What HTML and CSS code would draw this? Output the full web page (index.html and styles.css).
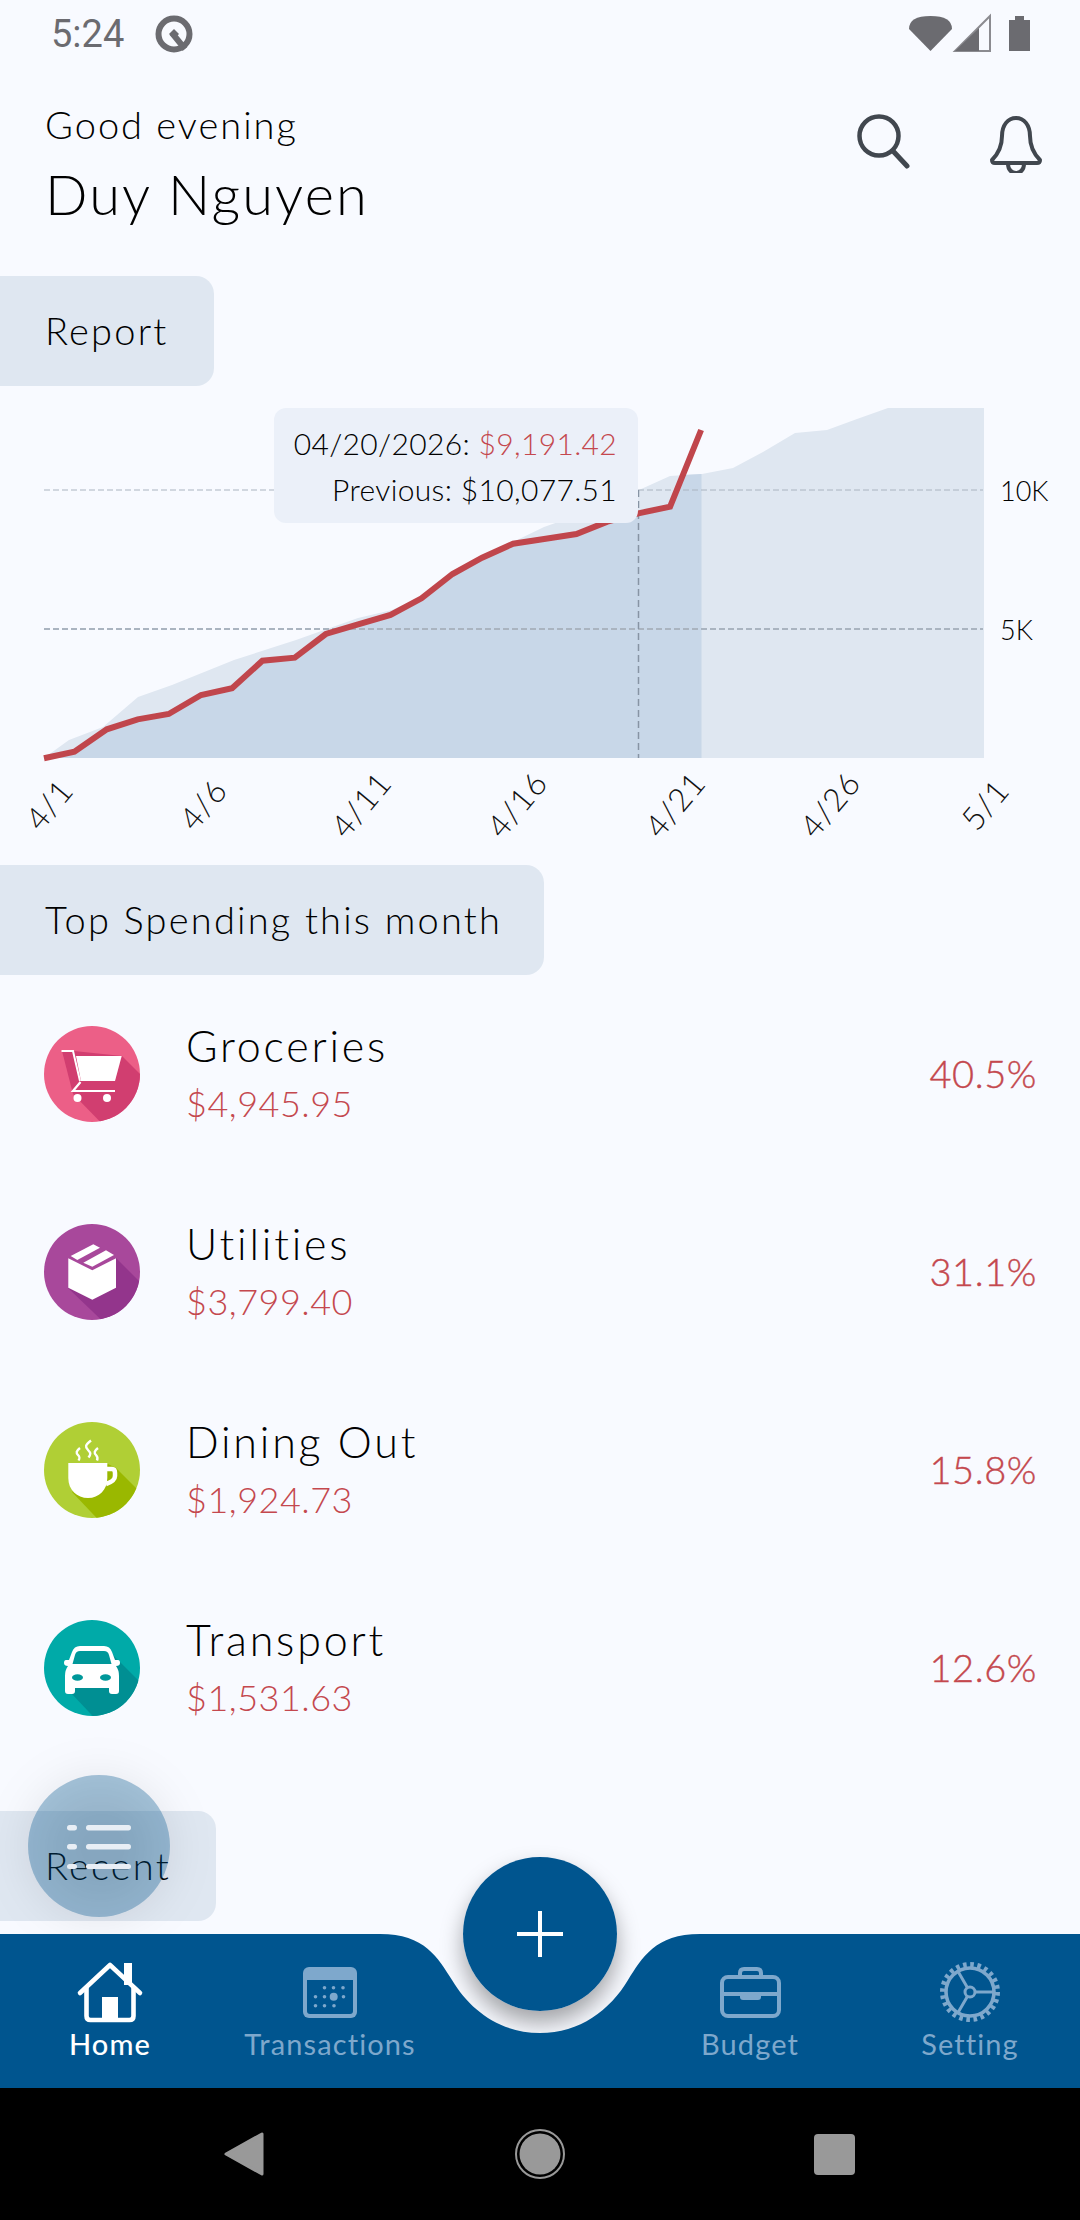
FILE: index.html
```html
<!DOCTYPE html>
<html lang="en">
<head>
<meta charset="utf-8">
<title>Home</title>
<link rel="stylesheet" href="styles.css">
</head>
<body>
<div class="phone">
  <main class="main">
    <div class="status">
      <div class="status-left">
        <span class="clock">5:24</span>
        <svg class="st-q" viewBox="0 0 40 40"><circle cx="20" cy="20" r="15.5" fill="none" stroke="#6b6b70" stroke-width="6"/><path d="M20 15l5 5-5 5-5-5z" fill="#6b6b70"/><path d="M18 19l13 16" stroke="#6b6b70" stroke-width="6"/></svg>
      </div>
      <svg class="st-right" viewBox="905 12 130 42">
        <path d="M909 28Q909 15 930.5 15T952 28L930.5 50Z" fill="#6b6b70"/>
        <path d="M990 15V50H955Z" fill="none" stroke="#8b8b90" stroke-width="2"/>
        <path d="M979 27V50H955Z" fill="#6b6b70"/>
        <path d="M1015 15h9v4h6v31h-21v-31h6z" fill="#6b6b70"/>
      </svg>
    </div>

    <header class="header">
      <div>
        <p class="greet">Good evening</p>
        <h1 class="name">Duy Nguyen</h1>
      </div>
      <div class="header-icons">
        <svg class="ic-search" viewBox="855 115 54 56"><circle cx="878" cy="138" r="19.5" fill="none" stroke="#41474f" stroke-width="4.5"/><path d="M892 153l14 15" stroke="#41474f" stroke-width="5" stroke-linecap="round"/></svg>
        <svg class="ic-bell" viewBox="986 113 56 60"><path d="M990 160Q1000 150 1000 136C1000 125 1006 118 1014 118C1022 118 1028 125 1028 136Q1028 150 1038 160Q1038 163 1035 163H993Q990 163 990 160Z" fill="none" stroke="#41474f" stroke-width="4" stroke-linejoin="round"/><path d="M1006 164C1006 176 1022 176 1022 164" fill="none" stroke="#41474f" stroke-width="4"/></svg>
      </div>
    </header>

    <div class="chip chip-report">Report</div>

    <section class="chart">
      <svg class="chart-svg" viewBox="0 386 1080 479">
        <path class="area-prev" d="M44 758L69 740L103 727L138 697L172 685L234 660L296 640L358 618L392 610L421 597L452 572L482 555L513 542L544 527L578 515L607 503L639 490L670 476L702 474L733 468L763 452L795 433L827 430L857 419L888 408H984V758Z"/>
        <path class="area-cur" d="M44 758L74.4 751.7L106.8 729.3L137.7 719.3L168.7 714L201.1 695L232.1 688.3L262.4 660.7L294.8 657.7L325.8 634L358.1 624.3L390.5 615L421.5 598.3L452.5 574L482.1 557.7L513.1 543.7L544.1 539L576.4 534L607.4 521.7L638.4 513.3L670.1 506.7L683 475L701.5 474V758Z"/>
        <path class="grid" d="M44 490H983"/>
        <path class="grid grid-strong" d="M44 629H983"/>
        <path class="cross" d="M638.5 490V758"/>
        <polyline class="line" points="44,758.3 74.4,751.7 106.8,729.3 137.7,719.3 168.7,714 201.1,695 232.1,688.3 262.4,660.7 294.8,657.7 325.8,634 358.1,624.3 390.5,615 421.5,598.3 452.5,574 482.1,557.7 513.1,543.7 544.1,539 576.4,534 607.4,521.7 638.4,513.3 670.1,506.7 701.1,430"/>
        <text class="ytick" x="1000" y="501">10K</text>
        <text class="ytick" x="1000" y="640">5K</text>
        <text class="xtick" transform="translate(58 812) rotate(-50)">4/1</text>
        <text class="xtick" transform="translate(212 812) rotate(-50)">4/6</text>
        <text class="xtick" transform="translate(370 812) rotate(-50)">4/11</text>
        <text class="xtick" transform="translate(526 812) rotate(-50)">4/16</text>
        <text class="xtick" transform="translate(684 812) rotate(-50)">4/21</text>
        <text class="xtick" transform="translate(839 812) rotate(-50)">4/26</text>
        <text class="xtick" transform="translate(994 812) rotate(-50)">5/1</text>
      </svg>
      <div class="tooltip">
        <div>04/20/2026: <span class="red">$9,191.42</span></div>
        <div>Previous: $10,077.51</div>
      </div>
    </section>

    <div class="chip chip-top">Top Spending this month</div>

    <ul class="rows">
      <li class="row">
        <svg class="cat" viewBox="0 0 96 96">
          <clipPath id="c1"><circle cx="48" cy="48" r="48"/></clipPath>
          <g clip-path="url(#c1)">
            <rect width="96" height="96" fill="#ec5f87"/>
            <path d="M18 25H30L78 30L110 62V110H70L29 68Z" fill="#d13e70"/>
          </g>
          <path d="M17.5 25H29L36 55" fill="none" stroke="#fff" stroke-width="2"/>
          <path d="M32 30H77.7L71 55H37Z" fill="#fff"/>
          <path d="M36.5 56L29 65H71" fill="none" stroke="#fff" stroke-width="2.2"/>
          <circle cx="33.5" cy="72" r="4" fill="#fff"/><circle cx="63" cy="72" r="4" fill="#fff"/>
        </svg>
        <div class="row-text"><div class="cat-name">Groceries</div><div class="cat-amt">$4,945.95</div></div>
        <div class="pct">40.5%</div>
      </li>
      <li class="row">
        <svg class="cat" viewBox="0 0 96 96">
          <clipPath id="c2"><circle cx="48" cy="48" r="48"/></clipPath>
          <g clip-path="url(#c2)">
            <rect width="96" height="96" fill="#a8489b"/>
            <path d="M72 34L110 72V110H72L24 64Z" fill="#93358c"/>
          </g>
          <path d="M24.3 34.3L48.3 46.3L72 34.3V63.7L48.3 75.7L24.3 63.7Z" fill="#fff"/>
          <path d="M26.7 32L49.3 20.3L56 23.7L33.3 36Z" fill="#fff"/>
          <path d="M39.3 38.7L62 26.3L70 31L48.3 42.7Z" fill="#fff"/>
        </svg>
        <div class="row-text"><div class="cat-name">Utilities</div><div class="cat-amt">$3,799.40</div></div>
        <div class="pct">31.1%</div>
      </li>
      <li class="row">
        <svg class="cat" viewBox="0 0 96 96">
          <clipPath id="c3"><circle cx="48" cy="48" r="48"/></clipPath>
          <g clip-path="url(#c3)">
            <rect width="96" height="96" fill="#b0cf35"/>
            <path d="M64 42L72 46L110 84V110H66L28 70Z" fill="#9ab800"/>
          </g>
          <path d="M24.3 41H63.3V56C63.3 68 55 76 44 76C33 76 24.3 68 24.3 56Z" fill="#fff"/>
          <path d="M62 47H68Q71 47 71 51V54Q71 59 62 62" fill="none" stroke="#fff" stroke-width="4.5"/>
          <path d="M36 26C32 29 32 31 34 33C36 35 36 36 34.5 38.5M47 18.5C41 23 41 25 44 28C47 31 47 32 44.5 35.5M54 26C50 29 50 31 52 33C54 35 54 36 53 38.5" fill="none" stroke="#fff" stroke-width="2.4"/>
        </svg>
        <div class="row-text"><div class="cat-name">Dining Out</div><div class="cat-amt">$1,924.73</div></div>
        <div class="pct">15.8%</div>
      </li>
      <li class="row">
        <svg class="cat" viewBox="0 0 96 96">
          <clipPath id="c4"><circle cx="48" cy="48" r="48"/></clipPath>
          <g clip-path="url(#c4)">
            <rect width="96" height="96" fill="#00aaa8"/>
            <path d="M68 34L110 76V110H62L26 72Z" fill="#008f93"/>
          </g>
          <path d="M36 26H60Q66 26 68 32L71 40H74Q76 40 76 43Q76 46 72 46Q75 50 75 56V71Q75 74 72 74H68Q65 74 65 71V68H31V71Q31 74 28 74H24Q21 74 21 71V56Q21 50 24 46Q20 46 20 43Q20 40 22 40H25L28 32Q30 26 36 26Z" fill="#fff"/>
          <path d="M36 31H60Q64 31 65 35L67.5 44H28.5L31 35Q32 31 36 31Z" fill="#00989a"/>
          <ellipse cx="33.5" cy="57.5" rx="5.5" ry="3.2" fill="#00989a"/><ellipse cx="61.5" cy="57.5" rx="5.5" ry="3.2" fill="#00989a"/>
        </svg>
        <div class="row-text"><div class="cat-name">Transport</div><div class="cat-amt">$1,531.63</div></div>
        <div class="pct">12.6%</div>
      </li>
    </ul>

    <div class="chip chip-recent">Recent</div>

    <button class="fab-list" aria-label="List">
      <svg viewBox="0 0 64 44"><g fill="#e8eef5"><rect x="0" y="0" width="10" height="5.5" rx="2.7"/><rect x="0" y="19" width="10" height="5.5" rx="2.7"/><rect x="0" y="39" width="10" height="5" rx="2.5"/><rect x="19" y="0" width="45" height="5.5" rx="2.7"/><rect x="19" y="19" width="45" height="5.5" rx="2.7"/><rect x="19" y="39" width="45" height="5" rx="2.5"/></g></svg>
    </button>
  </main>

  <nav class="nav">
    <div class="fab-shadow"></div>
    <svg class="nav-bg" viewBox="0 1857 1080 231"><path d="M0 1934H380C425 1934 438 1958 452 1980C470 2010 500 2033 540 2033C580 2033 610 2010 628 1980C642 1958 655 1934 700 1934H1080V2088H0Z" fill="#00558f"/></svg>
    <div class="nav-items">
      <a class="nav-item active">
        <svg class="nav-ic" viewBox="70 1958 80 68"><path d="M80 1993L110 1965L140 1993" fill="none" stroke="#fff" stroke-width="4.6" stroke-linecap="round" stroke-linejoin="round"/><path d="M86.5 1987V2016Q86.5 2020 90.5 2020H129.5Q133.5 2020 133.5 2016V1987" fill="none" stroke="#fff" stroke-width="4.6"/><rect x="102" y="1997" width="16" height="23" fill="#fff"/><rect x="124" y="1963" width="8" height="22" fill="#fff"/></svg>
        <span>Home</span>
      </a>
      <a class="nav-item">
        <svg class="nav-ic" viewBox="291 1958 80 68"><rect x="304" y="1967" width="54" height="51" rx="6" fill="#7ea8cc"/><path d="M308 1980H354V2011Q354 2014 351 2014H311Q308 2014 308 2011Z" fill="#00558f"/><g fill="#7ea8cc"><circle cx="334.700" cy="1996.700" r="4"/><circle cx="325.500" cy="1987.700" r="1.800"/><circle cx="334.500" cy="1987.700" r="1.800"/><circle cx="344" cy="1987.700" r="1.800"/><circle cx="316.500" cy="1996.700" r="1.800"/><circle cx="325.500" cy="1996.700" r="1.800"/><circle cx="344.500" cy="1996.700" r="1.800"/><circle cx="316.500" cy="2005.700" r="1.800"/><circle cx="325.500" cy="2005.700" r="1.800"/><circle cx="335" cy="2005.700" r="1.800"/></g></svg>
        <span>Transactions</span>
      </a>
      <div class="nav-gap"></div>
      <a class="nav-item">
        <svg class="nav-ic" viewBox="709 1958 80 68"><rect x="721" y="1977" width="57" height="39" rx="6" fill="none" stroke="#7ea8cc" stroke-width="4"/><path d="M739 1977V1973Q739 1969 743 1969H756Q760 1969 760 1973V1977" fill="none" stroke="#7ea8cc" stroke-width="4"/><path d="M721 1994H778" stroke="#7ea8cc" stroke-width="4"/><path d="M739 1994H760V1997Q760 2000 757 2000H742Q739 2000 739 1997Z" fill="#7ea8cc"/></svg>
        <span>Budget</span>
      </a>
      <a class="nav-item">
        <svg class="nav-ic" viewBox="930 1958 80 68"><circle cx="970" cy="1992" r="27.500" fill="none" stroke="#7ea8cc" stroke-width="5" stroke-dasharray="3.6 3.6"/><circle cx="970" cy="1992" r="24" fill="none" stroke="#7ea8cc" stroke-width="3.600"/><circle cx="970" cy="1992" r="5" fill="none" stroke="#7ea8cc" stroke-width="3"/><path d="M975 1992H994M967.500 1987.700L957.500 1970.500M967.500 1996.300L957.500 2013.500" stroke="#7ea8cc" stroke-width="3"/></svg>
        <span>Setting</span>
      </a>
    </div>
    <button class="fab-add" aria-label="Add">
      <svg viewBox="0 0 46 46"><path d="M23 0V46M0 23H46" stroke="#fff" stroke-width="4" stroke-linecap="round"/></svg>
    </button>
  </nav>

  <div class="sysbar">
    <svg class="sys-back" viewBox="0 0 40 44"><path d="M38 2V42L2 22Z" fill="#999" stroke="#999" stroke-width="3" stroke-linejoin="round"/></svg>
    <svg class="sys-home" viewBox="0 0 50 50"><circle cx="25" cy="25" r="24" fill="none" stroke="#999" stroke-width="2"/><circle cx="25" cy="25" r="20.500" fill="#999"/></svg>
    <div class="sys-square"></div>
  </div>
</div>
</body>
</html>
```
FILE: styles.css
```css
* { box-sizing: border-box; }
html, body { margin: 0; padding: 0; }
body { background: #f8faff; font-family: "Lato", "Noto Sans", sans-serif; color: #000; }
p, h1, ul { margin: 0; padding: 0; }
.phone { width: 1080px; height: 2220px; display: flex; flex-direction: column; overflow: hidden; position: relative; }
.main { height: 1934px; flex: none; position: relative; }

.status { height: 68px; display: flex; justify-content: space-between; align-items: center; padding: 0 43px 0 51px; }
.status-left { display: flex; align-items: center; gap: 30px; }
.clock { font-family: "Roboto", sans-serif; font-size: 38px; color: #6b6b70; line-height: 68px; }
.st-q { width: 40px; height: 40px; }
.st-right { width: 130px; height: 42px; margin-right: 2px; }

.header { height: 208px; display: flex; justify-content: space-between; padding: 33px 36px 0 45px; }
.greet { font-size: 38px; line-height: 46px; font-weight: 300; letter-spacing: 2px; }
.name { font-size: 56px; line-height: 66px; font-weight: 300; letter-spacing: 2.1px; margin-top: 14px; }
.header-icons { display: flex; gap: 78px; padding-top: 12px; }
.ic-search { width: 54px; height: 56px; }
.ic-bell { width: 56px; height: 60px; }

.chip { height: 110px; background: #dfe7f1; border-radius: 0 18px 18px 0; display: flex; align-items: center; padding-left: 45px; font-size: 38px; font-weight: 300; letter-spacing: 2.2px; padding-bottom: 2px; }
.chip-report { width: 214px; }
.chip-top { width: 544px; }
.chip-recent { width: 216px; margin-top: 44px; }

.chart { height: 479px; position: relative; }
.chart-svg { width: 1080px; height: 479px; display: block; }
.area-prev { fill: #dfe7f1; }
.area-cur { fill: #c8d7e8; }
.grid { fill: none; stroke: #aab4c0; stroke-width: 1; stroke-dasharray: 6 3; }
.grid-strong { stroke-width: 2; }
.cross { fill: none; stroke: #8794a4; stroke-width: 1.5; stroke-dasharray: 7 4; }
.line { fill: none; stroke: #c0464c; stroke-width: 6; stroke-linejoin: miter; }
.ytick { font-family: "Lato", sans-serif; font-size: 27px; font-weight: 300; fill: #000; }
.xtick { font-family: "Lato", sans-serif; font-size: 32px; font-weight: 300; fill: #111; text-anchor: middle; letter-spacing: 1px; }

.tooltip { position: absolute; left: 274px; top: 22px; width: 364px; height: 115px; background: #ebf0f9; border-radius: 12px; padding: 12px 21px 0 0; text-align: right; font-size: 30px; line-height: 46px; font-weight: 300; letter-spacing: .35px; }
.red { color: #c4484e; }

.rows { list-style: none; }
.row { height: 198px; display: flex; align-items: center; padding: 0 43px 0 44px; }
.cat { width: 96px; height: 96px; flex: none; margin-top: -1px; }
.row-text { margin-left: 46px; flex: 1; margin-top: -2px; }
.cat-name { font-size: 43px; line-height: 54px; font-weight: 300; letter-spacing: 2.8px; }
.cat-amt { font-size: 36px; line-height: 50px; font-weight: 300; color: #c4484e; letter-spacing: .5px; margin-top: 5px; }
.pct { font-size: 38px; font-weight: 300; color: #c4484e; letter-spacing: .6px; margin-top: -2px; -webkit-text-stroke: .4px #c4484e; }

.fab-list { position: absolute; left: 28px; top: 1775px; width: 142px; height: 142px; border-radius: 50%; border: 0; padding: 0; background: rgba(0, 85, 143, .33); filter: drop-shadow(0 2px 22px rgba(0, 0, 0, .25)); display: flex; align-items: center; justify-content: center; }
.fab-list svg { width: 64px; height: 44px; margin-top: 1px; }

.nav { height: 154px; flex: none; position: relative; }
.nav-bg { position: absolute; left: 0; bottom: 0; width: 1080px; height: 231px; display: block; }
.fab-shadow { position: absolute; left: 463px; top: -77px; width: 154px; height: 154px; border-radius: 50%; box-shadow: 0 12px 22px rgba(0, 0, 0, .35); }
.nav-items { position: relative; height: 154px; display: grid; grid-template-columns: 220px 220px 200px 220px 220px; }
.nav-gap { width: 200px; }
.nav-item { display: flex; flex-direction: column; align-items: center; padding-top: 24px; font-size: 29px; font-weight: 400; color: #7ea8cc; letter-spacing: 1.1px; line-height: 36px; }
.nav-item.active { color: #fff; font-weight: 500; }
.nav-ic { width: 80px; height: 68px; display: block; }
.fab-add { position: absolute; left: 463px; top: -77px; width: 154px; height: 154px; border-radius: 50%; border: 0; padding: 0; background: #00558f; display: flex; align-items: center; justify-content: center; }
.fab-add svg { width: 46px; height: 46px; }

.sysbar { height: 132px; flex: none; background: #000; position: relative; }
.sys-back { width: 40px; height: 44px; position: absolute; left: 224px; top: 44px; }
.sys-home { width: 50px; height: 50px; position: absolute; left: 515px; top: 41px; }
.sys-square { width: 41px; height: 41px; background: #999; border-radius: 4px; position: absolute; left: 814px; top: 46px; }
```
